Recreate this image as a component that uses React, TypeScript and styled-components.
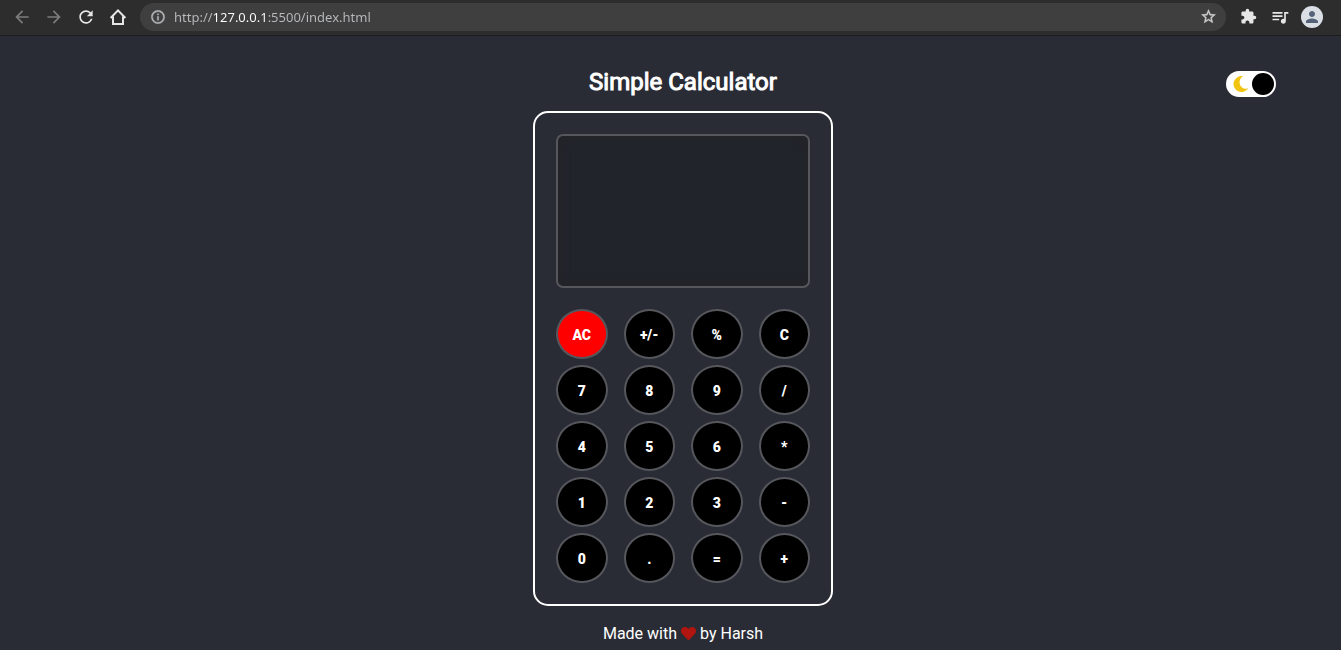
import React, { useState } from 'react';
import styled, { createGlobalStyle } from 'styled-components';
import {
  MdArrowBack,
  MdArrowForward,
  MdRefresh,
  MdInfoOutline,
  MdStarBorder,
  MdExtension,
  MdQueueMusic,
  MdPerson,
} from 'react-icons/md';

const GlobalStyle = createGlobalStyle`
  *, *::before, *::after { box-sizing: border-box; }
  html, body, #root { height: 100%; }
  body {
    margin: 0;
    background: #2a2c35;
    color: #fff;
    font-family: Roboto, "Liberation Sans", sans-serif;
  }
`;

const Shell = styled.div`
  display: flex;
  flex-direction: column;
  min-height: 100%;
`;

const BrowserBar = styled.header`
  display: flex;
  align-items: center;
  gap: 8px;
  height: 36px;
  padding: 0 18px 2px 10px;
  background: #2d2d2d;
  border-bottom: 1px solid #1c1c1e;
`;

const BarButton = styled.button<{ $muted?: boolean }>`
  display: flex;
  align-items: center;
  justify-content: center;
  flex: none;
  width: 24px;
  height: 24px;
  padding: 0;
  border: 0;
  background: none;
  color: ${({ $muted }) => ($muted ? '#7c7c7c' : '#e6e6e6')};
`;

const AddressBar = styled.div`
  display: flex;
  align-items: center;
  flex: 1;
  gap: 8px;
  height: 28px;
  margin: 0 2px;
  padding: 0 6px 0 10px;
  border-radius: 14px;
  background: #3f3f3f;
  color: #b4b6b9;

  ${BarButton} {
    color: #cdcdcd;
  }

  path:not([fill='none']) {
    stroke: currentColor;
    stroke-width: 0.5;
  }
`;

const AddressInput = styled.input`
  flex: 1;
  min-width: 0;
  height: 20px;
  padding: 0;
  border: 0;
  outline: 0;
  font: 13px/20px "Noto Sans", "Open Sans", sans-serif;
  color: transparent;
  caret-color: #fff;
  background: linear-gradient(to right, #b8babd 40px, #fff 40px, #fff 94px, #b8babd 94px);
  background-clip: text;
  -webkit-background-clip: text;
`;

const Avatar = styled.button`
  display: flex;
  align-items: center;
  justify-content: center;
  flex: none;
  width: 22px;
  height: 22px;
  margin-left: 1px;
  padding: 0;
  border: 0;
  border-radius: 50%;
  background: #dadfe6;
  color: #566279;
`;

const Page = styled.main`
  position: relative;
  display: flex;
  flex: 1;
  flex-direction: column;
  align-items: center;
  padding: 31px 0 0 25px;
`;

const Title = styled.h1`
  margin: 0 0 14px;
  font-size: 24px;
  line-height: 30px;
  font-weight: 400;
  -webkit-text-stroke: 1px currentColor;
`;

const ThemeToggle = styled.label`
  position: absolute;
  top: 35px;
  right: 65px;
  display: flex;
  align-items: center;
  justify-content: space-between;
  width: 50px;
  height: 26px;
  padding: 0 2px 0 6px;
  border-radius: 13px;
  background: #fff;
  cursor: pointer;
`;

const ToggleInput = styled.input`
  appearance: none;
  order: 1;
  width: 22px;
  height: 22px;
  margin: 0;
  border-radius: 50%;
  background: #000;
  cursor: pointer;
`;

const Calculator = styled.section`
  display: flex;
  flex-direction: column;
  gap: 21px;
  width: 300px;
  padding: 21px;
  border: 2px solid #fff;
  border-radius: 15px;
`;

const Display = styled.output`
  display: flex;
  align-items: flex-end;
  justify-content: flex-end;
  height: 154px;
  padding: 12px;
  border: 2px solid #56575d;
  border-radius: 7px;
  background: #21242b;
  box-shadow: inset 0 0 12px #242425;
  font-size: 28px;
  overflow: hidden;
`;

const Keypad = styled.div`
  display: grid;
  grid-template-columns: repeat(4, 1fr);
  gap: 6px 16px;
`;

const Key = styled.button<{ $danger?: boolean }>`
  height: 50px;
  padding: 2px 0 0;
  border: 2px solid #56575d;
  border-radius: 50%;
  background: ${({ $danger }) => ($danger ? '#f00' : '#000')};
  color: #fff;
  font: 900 14px/16px Roboto, "Liberation Sans", sans-serif;
  cursor: pointer;
`;

const Credit = styled.footer`
  display: flex;
  align-items: center;
  gap: 4px;
  margin-top: 18px;
  font-size: 16px;
  line-height: 20px;
`;

const HomeIcon = () => (
  <svg width="20" height="20" viewBox="0 0 20 20" fill="none" stroke="currentColor" strokeWidth="2" aria-hidden="true">
    <path d="M2.6 11 10 3.4 17.4 11M5 9.5V17h10V9.5" />
  </svg>
);

const MoonIcon = () => (
  <svg width="17" height="18" viewBox="0 0 17 18" aria-hidden="true">
    <path
      d="M11 1.200A8 8 0 1 0 16.300 13.300C12.500 14.800 8.300 12.300 7.700 8.400 7.200 5.400 8.500 2.700 11 1.200Z"
      fill="#f1c40f"
    />
  </svg>
);

const HeartIcon = () => (
  <svg width="15" height="16" viewBox="0 0 512 546" aria-label="love" role="img">
    <path
      fill="#b0150f"
      d="M462.300 62.600C407.500 15.900 326 24.300 275.700 76.200L256 96.500l-19.700-20.300C186.100 24.300 104.500 15.900 49.700 62.600c-62.800 53.600-66.100 149.800-9.900 207.900l193.500 199.800c12.500 12.900 32.800 12.900 45.300 0l193.500-199.800c56.300-58.100 53-154.300-9.800-207.900z"
    />
  </svg>
);

const KEYS = ['AC', '+/-', '%', 'C', '7', '8', '9', '/', '4', '5', '6', '*', '1', '2', '3', '-', '0', '.', '=', '+'];

type Op = '+' | '-' | '*' | '/';

const compute = (a: number, b: number, op: Op) =>
  op === '+' ? a + b : op === '-' ? a - b : op === '*' ? a * b : a / b;

export default function App() {
  const [entry, setEntry] = useState('');
  const [stored, setStored] = useState<number | null>(null);
  const [op, setOp] = useState<Op | null>(null);
  const [url, setUrl] = useState('http://127.0.0.1:5500/index.html');

  const press = (key: string) => {
    if (/^\d$/.test(key)) return setEntry(entry + key);
    if (key === '.') return setEntry(entry.includes('.') ? entry : (entry || '0') + '.');
    if (key === 'C') return setEntry(entry.slice(0, -1));
    if (key === 'AC') {
      setEntry('');
      setStored(null);
      return setOp(null);
    }
    if (!entry) return;
    const value = Number(entry);
    if (key === '+/-') return setEntry(String(-value));
    if (key === '%') return setEntry(String(value / 100));
    const result = stored !== null && op ? compute(stored, value, op) : value;
    if (key === '=') {
      setEntry(String(result));
      setStored(null);
      return setOp(null);
    }
    setStored(result);
    setOp(key as Op);
    setEntry('');
  };

  return (
    <>
      <GlobalStyle />
      <Shell>
        <BrowserBar>
          <BarButton $muted aria-label="Back"><MdArrowBack size={20} /></BarButton>
          <BarButton $muted aria-label="Forward"><MdArrowForward size={20} /></BarButton>
          <BarButton aria-label="Reload"><MdRefresh size={20} /></BarButton>
          <BarButton aria-label="Home"><HomeIcon /></BarButton>
          <AddressBar>
            <MdInfoOutline size={16} />
            <AddressInput
              aria-label="Address"
              spellCheck={false}
              value={url}
              onChange={(e) => setUrl(e.target.value)}
            />
            <BarButton aria-label="Bookmark"><MdStarBorder size={17} /></BarButton>
          </AddressBar>
          <BarButton aria-label="Extensions"><MdExtension size={17} /></BarButton>
          <BarButton aria-label="Media controls"><MdQueueMusic size={20} /></BarButton>
          <Avatar aria-label="Profile"><MdPerson size={18} /></Avatar>
        </BrowserBar>
        <Page>
          <Title>Simple Calculator</Title>
          <ThemeToggle>
            <ToggleInput type="checkbox" role="switch" defaultChecked aria-label="Dark theme" />
            <MoonIcon />
          </ThemeToggle>
          <Calculator aria-label="Calculator">
            <Display aria-label="Result">{entry}</Display>
            <Keypad>
              {KEYS.map((key) => (
                <Key key={key} type="button" $danger={key === 'AC'} onClick={() => press(key)}>
                  {key}
                </Key>
              ))}
            </Keypad>
          </Calculator>
          <Credit>
            <span>Made with</span>
            <HeartIcon />
            <span>by Harsh</span>
          </Credit>
        </Page>
      </Shell>
    </>
  );
}
